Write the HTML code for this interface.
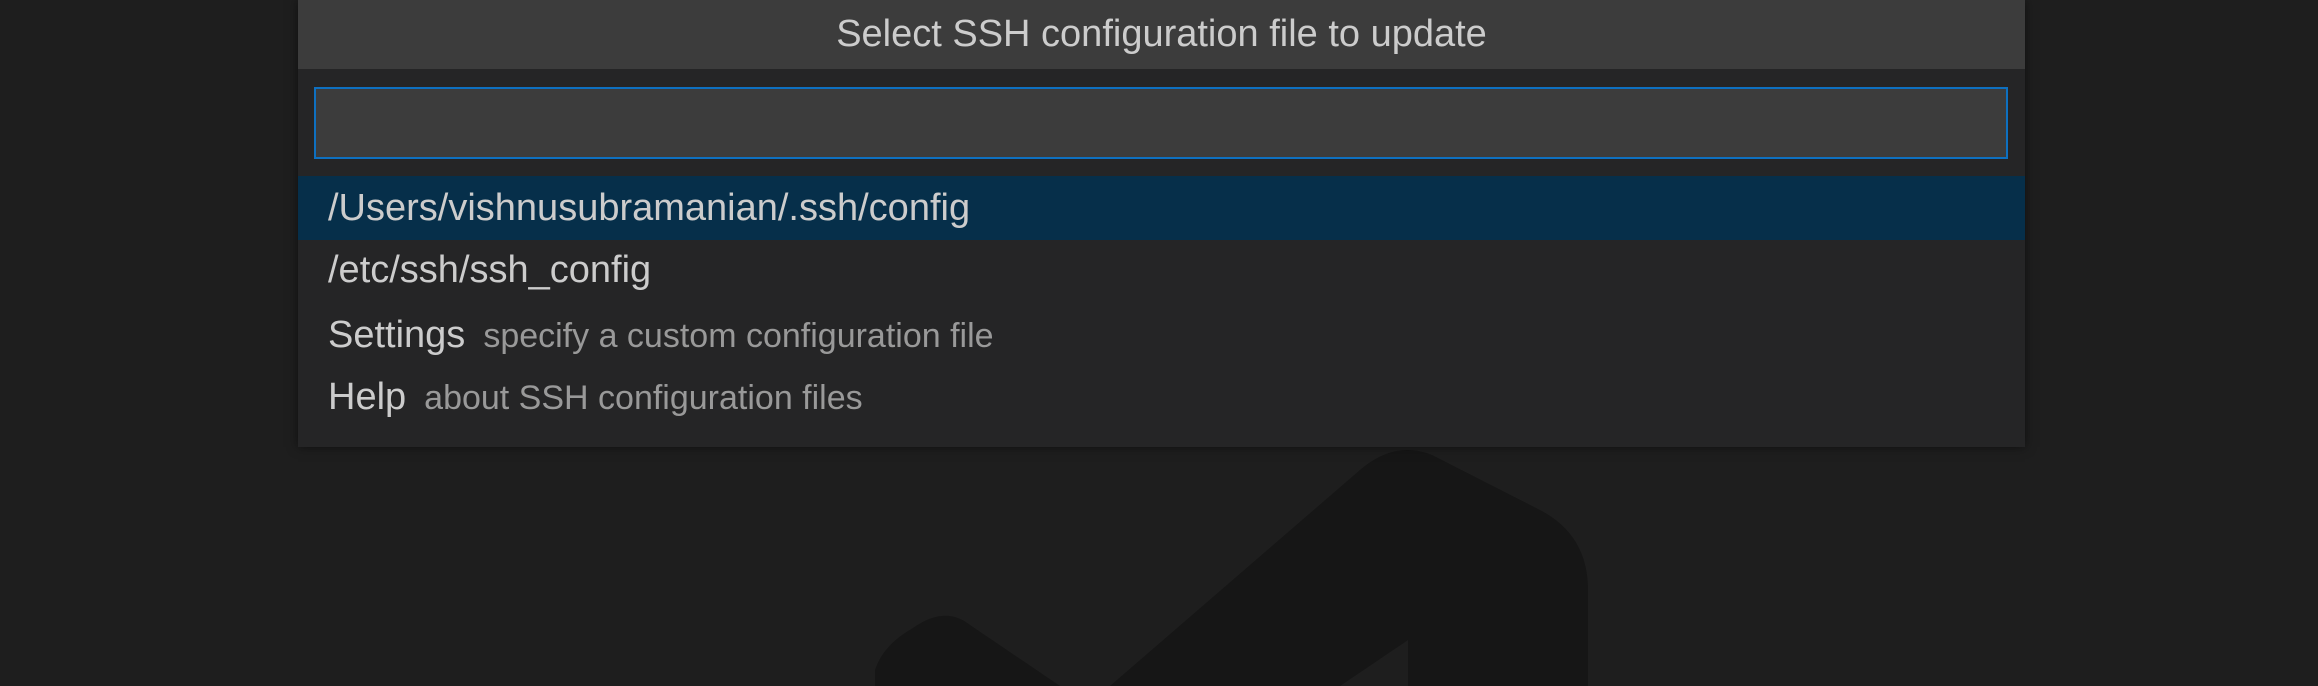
<!DOCTYPE html>
<html><head><style>
html,body{margin:0;padding:0;width:2318px;height:686px;background:#1e1e1e;overflow:hidden;font-family:"Liberation Sans",Helvetica,Arial,sans-serif}
#logo{position:absolute;left:0;top:0}
.panel{position:absolute;left:298px;top:0;width:1727px;height:447px;background:#252526;box-shadow:0 0 10px rgba(0,0,0,.5)}
.title{height:69px;background:#3c3c3c;color:#cccccc;font-size:38px;text-align:center;line-height:68px}
.input{position:absolute;left:16px;top:87px;width:1694px;height:72px;box-sizing:border-box;border:2px solid #0e70c0;background:#3c3c3c}
.row{position:absolute;left:0;width:1727px;height:64px;line-height:64px;color:#cccccc;font-size:38px;padding-left:30px;box-sizing:border-box;white-space:nowrap}
.row .d{color:#999;font-size:34px;margin-left:18px}
.sel{background:#062f4a}
</style></head><body>
<svg id="logo" width="2318" height="686">
<path fill="#161616" d="M1110 686 L1360 470 Q1395 440 1432 455 L1540 510 Q1588 535 1588 590 L1588 686 L1408 686 L1408 640 L1340 686 Z"/>
<path fill="#161616" d="M875 686 L875 670 Q883 645 913 628 Q945 605 970 625 L1060 686 Z"/>
</svg>
<div class="panel">
<div class="title">Select SSH configuration file to update</div>
<div class="input"></div>
<div class="row sel" style="top:176px">/Users/vishnusubramanian/.ssh/config</div>
<div class="row" style="top:238px">/etc/ssh/ssh_config</div>
<div class="row" style="top:303px">Settings<span class="d">specify a custom configuration file</span></div>
<div class="row" style="top:365px">Help<span class="d">about SSH configuration files</span></div>
</div>
</body></html>
